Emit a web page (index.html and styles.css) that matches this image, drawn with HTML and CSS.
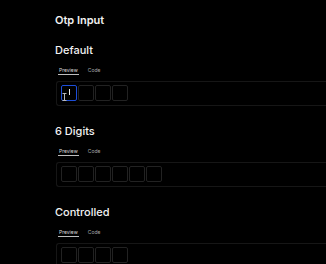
FILE: index.html
```html
<!DOCTYPE html>
<html lang="en">
<head>
    <meta charset="UTF-8">
    <meta name="viewport" content="width=device-width, initial-scale=1.0">
    <title>Otp Input</title>
    <link rel="stylesheet" href="styles.css">
</head>
<body>
    <main class="page">
        <h1>Otp Input</h1>

        <section class="demo">
            <h2>Default</h2>
            <div class="tabs">
                <span class="tab active">Preview</span>
                <span class="tab">Code</span>
            </div>
            <div class="preview">
                <div class="otp">
                    <div class="cell focused">
                        <span class="caret"></span>
                        <!-- mouse pointer left over the first box -->
                        <svg class="ibeam" width="5" height="8" viewBox="0 0 5 8">
                            <path d="M0.5 0.5h4M2.5 0.5v7M0.5 7.5h4" stroke="#b8b8b8" stroke-width="1" fill="none"/>
                        </svg>
                    </div>
                    <div class="cell"></div>
                    <div class="cell"></div>
                    <div class="cell"></div>
                </div>
            </div>
        </section>

        <section class="demo">
            <h2>6 Digits</h2>
            <div class="tabs">
                <span class="tab active">Preview</span>
                <span class="tab">Code</span>
            </div>
            <div class="preview">
                <div class="otp">
                    <div class="cell"></div>
                    <div class="cell"></div>
                    <div class="cell"></div>
                    <div class="cell"></div>
                    <div class="cell"></div>
                    <div class="cell"></div>
                </div>
            </div>
        </section>

        <section class="demo">
            <h2>Controlled</h2>
            <div class="tabs">
                <span class="tab active">Preview</span>
                <span class="tab">Code</span>
            </div>
            <div class="preview">
                <div class="otp">
                    <div class="cell"></div>
                    <div class="cell"></div>
                    <div class="cell"></div>
                    <div class="cell"></div>
                </div>
            </div>
        </section>
    </main>
</body>
</html>
```

FILE: styles.css
```css
html, body {
    margin: 0;
    padding: 0;
    background-color: #000;
    color: #f2f2f2;
    font-family: Inter, "Noto Sans", sans-serif;
    overflow: hidden;
}

.page {
    padding: 13px 0 0 55px;
    width: 271px;
}

h1 {
    margin: 0;
    font-size: 11px;
    font-weight: 600;
    line-height: 14px;
}

.demo {
    margin-top: 16px;
}

.demo + .demo {
    margin-top: 18px;
}

h2 {
    margin: 0;
    font-size: 11px;
    font-weight: 500;
    line-height: 14px;
}

.tabs {
    display: flex;
    gap: 9px;
    margin-top: 10px;
    padding-left: 4px;
}

.tab {
    font-size: 5px;
    line-height: 7px;
    color: #a8a8a8;
}

.tab.active {
    color: #d8d8d8;
    border-bottom: 1px solid #bdbdbd;
    padding: 0 1px;
    margin-left: -1px;
}

.preview {
    margin-top: 6px;
    margin-left: 1px;
    border: 1px solid #161616;
    border-right: none;
    border-radius: 3px 0 0 3px;
    padding: 3px 4px 4px;
}

.otp {
    display: flex;
    gap: 1px;
}

.cell {
    width: 14px;
    height: 14px;
    border: 1px solid #222;
    border-radius: 2px;
    position: relative;
}

.cell.focused {
    border-color: #1d4ed8;
}

.caret {
    position: absolute;
    left: 7px;
    top: 3px;
    width: 1px;
    height: 6px;
    background-color: #e6e6e6;
}

.ibeam {
    position: absolute;
    left: 0;
    top: 7px;
}
```
